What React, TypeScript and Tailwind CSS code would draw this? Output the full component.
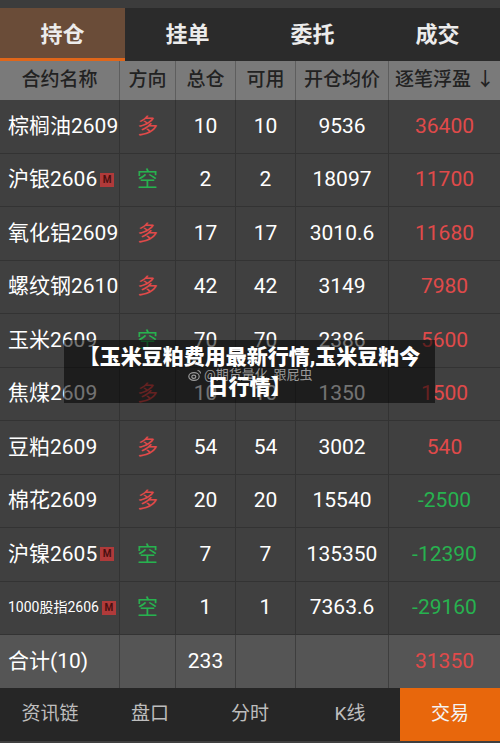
import React from "react";

type Row = {
  name: string;
  small?: boolean;
  m?: boolean;
  dir: "多" | "空";
  total: string;
  avail: string;
  price: string;
  pnl: string;
};

const rows: Row[] = [
  { name: "棕榈油2609", dir: "多", total: "10", avail: "10", price: "9536", pnl: "36400" },
  { name: "沪银2606", m: true, dir: "空", total: "2", avail: "2", price: "18097", pnl: "11700" },
  { name: "氧化铝2609", dir: "多", total: "17", avail: "17", price: "3010.6", pnl: "11680" },
  { name: "螺纹钢2610", dir: "多", total: "42", avail: "42", price: "3149", pnl: "7980" },
  { name: "玉米2609", dir: "空", total: "70", avail: "70", price: "2386", pnl: "5600" },
  { name: "焦煤2609", dir: "多", total: "10", avail: "10", price: "1350", pnl: "1500" },
  { name: "豆粕2609", dir: "多", total: "54", avail: "54", price: "3002", pnl: "540" },
  { name: "棉花2609", dir: "多", total: "20", avail: "20", price: "15540", pnl: "-2500" },
  { name: "沪镍2605", m: true, dir: "空", total: "7", avail: "7", price: "135350", pnl: "-12390" },
  { name: "1000股指2606", small: true, m: true, dir: "空", total: "1", avail: "1", price: "7363.6", pnl: "-29160" },
];

const font = { fontFamily: 'Roboto, "Noto Sans CJK SC", sans-serif' };

function MBadge() {
  return (
    <span className="ml-[3px] inline-flex h-[14px] w-[14px] shrink-0 items-center justify-center bg-[#b03a3a] text-[10px] font-bold leading-none text-[#4a1010]">
      M
    </span>
  );
}

export default function App() {
  const grid = "grid grid-cols-[120px_56px_60px_60px_93px_111px]";
  return (
    <div className="relative h-[743px] w-[500px] overflow-hidden bg-[#3f3f3f] text-white" style={font}>
      {/* top strip */}
      <div className="h-[8px] bg-[#3c3c3c]" />
      {/* tabs */}
      <div className="grid h-[53px] grid-cols-4 bg-[#2b2b2b] text-[22px] font-bold">
        <div className="flex items-center justify-center border-b-[3px] border-[#e0661a] bg-[#6a4c38] pt-[2px] text-[#ececec]">持仓</div>
        <div className="flex items-center justify-center text-[#ececec]">挂单</div>
        <div className="flex items-center justify-center text-[#ececec]">委托</div>
        <div className="flex items-center justify-center text-[#ececec]">成交</div>
      </div>
      {/* header */}
      <div className={`${grid} h-[39px] bg-[#7a7a7a] text-[19px] font-medium text-[#222222]`}>
        {["合约名称", "方向", "总仓", "可用", "开仓均价", "逐笔浮盈 ↓"].map((h, i) => (
          <div key={i} className={`flex items-center justify-center whitespace-nowrap border-r border-[#5e5e5e] last:border-r-0 ${i === 5 ? "justify-start pl-[6px]" : ""}`}>
            {h}
          </div>
        ))}
      </div>
      {/* rows */}
      {rows.map((r, idx) => {
        const neg = r.pnl.startsWith("-");
        return (
          <div key={idx} className={`${grid} h-[53.5px] border-b border-[#333333] bg-[#404040] text-[21px]`}>
            <div className="flex items-center whitespace-nowrap border-r border-[#333333] pl-[8px]">
              <span className={r.small ? "text-[14px]" : ""}>{r.name}</span>
              {r.m && <MBadge />}
            </div>
            <div className={`flex items-center justify-center border-r border-[#333333] ${r.dir === "多" ? "text-[#e04a4a]" : "text-[#27b24f]"}`}>
              {r.dir}
            </div>
            <div className="flex items-center justify-center border-r border-[#333333]">{r.total}</div>
            <div className="flex items-center justify-center border-r border-[#333333]">{r.avail}</div>
            <div className="flex items-center justify-center border-r border-[#333333]">{r.price}</div>
            <div className={`flex items-center justify-center ${neg ? "text-[#27b24f]" : "text-[#e04a4a]"}`}>{r.pnl}</div>
          </div>
        );
      })}
      {/* total */}
      <div className={`${grid} h-[53px] bg-[#555555] text-[21px]`}>
        <div className="flex items-center whitespace-nowrap border-r border-[#3e3e3e] pl-[8px]">合计(10)</div>
        <div className="border-r border-[#3e3e3e]" />
        <div className="flex items-center justify-center border-r border-[#3e3e3e]">233</div>
        <div className="border-r border-[#3e3e3e]" />
        <div className="border-r border-[#3e3e3e]" />
        <div className="flex items-center justify-center text-[#e04a4a]">31350</div>
      </div>
      {/* bottom nav */}
      <div className="grid h-[53px] grid-cols-5 bg-[#262626] text-[19px] text-[#bdbdbd]">
        <div className="flex items-center justify-center">资讯链</div>
        <div className="flex items-center justify-center">盘口</div>
        <div className="flex items-center justify-center">分时</div>
        <div className="flex items-center justify-center">K线</div>
        <div className="flex items-center justify-center bg-[#e8670c] text-[#f4f4f4]">交易</div>
      </div>

      {/* overlay caption */}
      <div className="absolute left-[64px] top-[340px] flex h-[63px] w-[371px] flex-col items-center justify-center bg-black/55">
        <div className="absolute left-[124px] top-[25px] flex items-center gap-[2px] text-[13px] text-[#9a9a9a]">
          <svg width="14" height="12" viewBox="0 0 14 12" fill="none" stroke="#9a9a9a" strokeWidth="1.2">
            <ellipse cx="6" cy="7.5" rx="5.2" ry="3.8" />
            <ellipse cx="5.8" cy="7.8" rx="2" ry="1.6" />
            <path d="M9.5 1.5 a3 3 0 0 1 3 3" />
          </svg>
          <span>@期货量化_跟屁虫</span>
        </div>
        <div className="relative whitespace-nowrap text-center text-[21px] font-black leading-[30px] text-white">
          【玉米豆粕费用最新行情,玉米豆粕今
          <br />
          日行情】
        </div>
      </div>
    </div>
  );
}
